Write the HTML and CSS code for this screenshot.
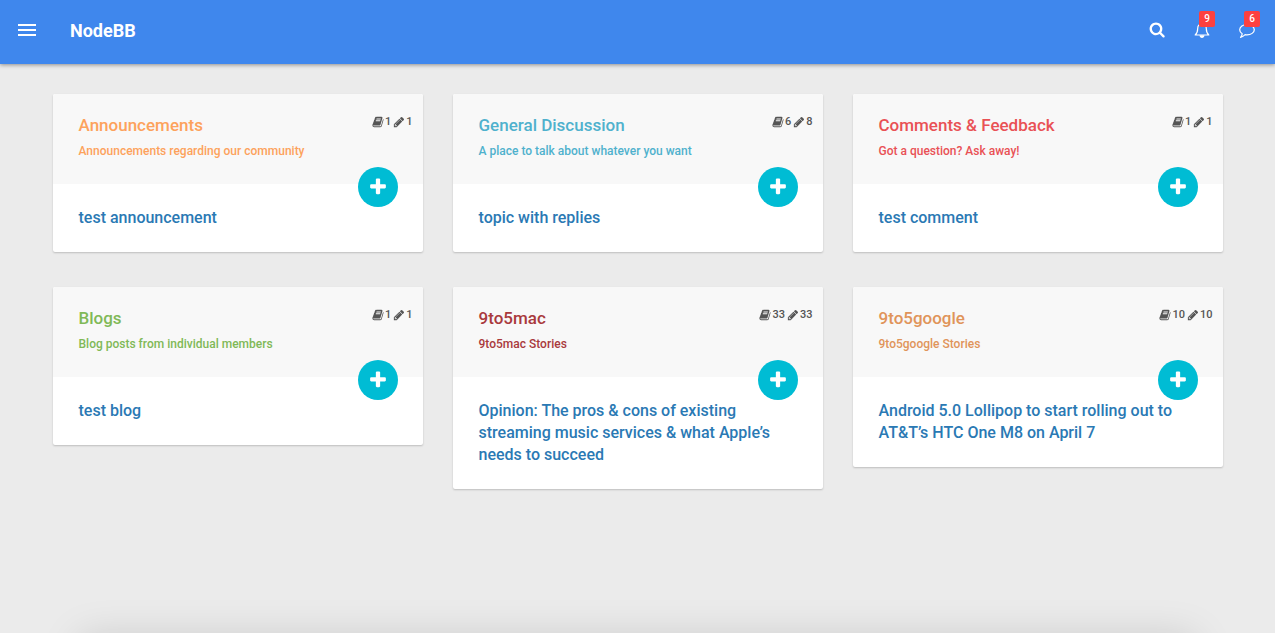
FILE: index.html
```html
<!DOCTYPE html>
<html lang="en">
<head>
<meta charset="utf-8">
<meta name="viewport" content="width=device-width, initial-scale=1">
<title>NodeBB</title>
<link rel="stylesheet" href="styles.css">
</head>
<body>
<svg class="sprite" aria-hidden="true">
  <symbol id="book" viewBox="0 0 1792 1792"><path d="M1703 478q40 57 18 129l-275 906q-19 64-76.5 107.5t-122.5 43.5h-923q-77 0-148.5-53.5t-99.5-131.5q-24-67-2-127 0-4 3-27t4-37q1-8-3-21.5t-3-19.5q2-11 8-21t16.5-23.5 16.5-23.5q23-38 45-91.5t30-91.5q3-10 .5-30t-.5-28q3-11 17-28t17-23q21-36 42-92t25-90q1-9-2.5-32t.5-28q4-13 22-30.5t22-22.5q19-26 42.5-84.5t27.5-96.5q1-8-3-25.5t-2-26.5q2-8 9-18t18-23 17-21q8-12 16.5-30.5t15-35 16-36 19.5-32 26.5-23.5 36-11.5 47.5 5.5l-1 3q38-9 51-9h761q74 0 114 56t18 130l-274 906q-36 119-71.5 153.5t-128.5 34.5h-869q-27 0-38 15-11 16-1 43 24 70 144 70h923q29 0 56-15.5t35-41.5l300-987q7-22 5-57 38 15 59 43zm-1064 2q-4 13 2 22.5t20 9.5h608q13 0 25.5-9.5t16.5-22.5l21-64q4-13-2-22.5t-20-9.5h-608q-13 0-25.5 9.5t-16.5 22.5zm-83 256q-4 13 2 22.5t20 9.5h608q13 0 25.5-9.5t16.5-22.5l21-64q4-13-2-22.5t-20-9.5h-608q-13 0-25.5 9.5t-16.5 22.5z"/></symbol>
  <symbol id="pencil" viewBox="0 0 1792 1792"><path d="M491 1536l91-91-235-235-91 91v107h128v128h107zm523-928q0-22-22-22-10 0-17 7l-542 542q-7 7-7 17 0 22 22 22 10 0 17-7l542-542q7-7 7-17zm-54-192l416 416-832 832h-416v-416zm683 96q0 53-37 90l-166 166-416-416 166-165q36-38 90-38 53 0 91 38l235 234q37 39 37 91z"/></symbol>
  <symbol id="plus" viewBox="0 0 1792 1792"><path d="M1600 736v192q0 40-28 68t-68 28h-416v416q0 40-28 68t-68 28h-192q-40 0-68-28t-28-68v-416h-416q-40 0-68-28t-28-68v-192q0-40 28-68t68-28h416v-416q0-40 28-68t68-28h192q40 0 68 28t28 68v416h416q40 0 68 28t28 68z"/></symbol>
</svg>

<header class="navbar">
  <button class="icon-button menu-button" type="button" aria-label="Menu">
    <svg width="18" height="12" viewBox="0 0 18 12"><path d="M0 0h18v2H0zM0 5h18v2H0zM0 10h18v2H0z"/></svg>
  </button>
  <a class="brand" href="#">NodeBB</a>
  <nav class="tools" aria-label="User tools">
    <button class="icon-button" type="button" aria-label="Search">
      <svg width="16" height="16" viewBox="0 80 1760 1760"><path d="M1216 832q0-185-131.500-316.500t-316.500-131.500-316.500 131.500-131.500 316.500 131.500 316.500 316.500 131.500 316.500-131.500 131.500-316.500zm512 832q0 52-38 90t-90 38q-54 0-90-38l-343-342q-179 124-399 124-143 0-273.500-55.500t-225-150-150-225-55.500-273.500 55.500-273.500 150-225 225-150 273.500-55.500 273.500 55.500 225 150 150 225 55.500 273.500q0 220-124 399l343 343q37 37 37 90z"/></svg>
    </button>
    <button class="icon-button" type="button" aria-label="Notifications, 9 unread">
      <svg width="16" height="16" viewBox="0 0 16 16"><path class="line" d="M1.200 13C3 11.500 3.700 9.500 3.700 6.500C3.700 3.500 5.300 2 8 2s4.300 1.500 4.300 4.500C12.300 9.500 13 11.500 14.800 13z"/><path d="M5.500 13.300h5C10.300 15 9.400 16 8 16s-2.300-1-2.500-2.700zM7.200.5h1.600v1.700H7.200z"/></svg>
      <span class="badge">9</span>
    </button>
    <button class="icon-button" type="button" aria-label="Chats, 6 unread">
      <svg width="16" height="16" viewBox="0 0 16 16"><path class="line" d="M8 2.500C12 2.500 15.300 4.700 15.300 7.700S12 12.800 8 12.800c-.7 0-1.300 0-1.900-.2C4.800 14 3.400 14.900 1.500 15.300c1-1 1.700-2 1.700-3.600C1.600 10.800.7 9.400.7 7.700.7 4.700 4 2.500 8 2.500z"/></svg>
      <span class="badge">6</span>
    </button>
  </nav>
</header>

<main class="categories">
  <article class="card">
    <header class="card-head orange">
      <div><h2><a href="#">Announcements</a></h2><p>Announcements regarding our community</p></div>
      <div class="stats"><svg><use href="#book"/></svg><span>1</span><svg><use href="#pencil"/></svg><span>1</span></div>
      <button class="add" type="button" aria-label="New topic"><svg><use href="#plus"/></svg></button>
    </header>
    <a class="topic" href="#">test announcement</a>
  </article>
  <article class="card">
    <header class="card-head cyan">
      <div><h2><a href="#">General Discussion</a></h2><p>A place to talk about whatever you want</p></div>
      <div class="stats"><svg><use href="#book"/></svg><span>6</span><svg><use href="#pencil"/></svg><span>8</span></div>
      <button class="add" type="button" aria-label="New topic"><svg><use href="#plus"/></svg></button>
    </header>
    <a class="topic" href="#">topic with replies</a>
  </article>
  <article class="card">
    <header class="card-head red">
      <div><h2><a href="#">Comments &amp; Feedback</a></h2><p>Got a question? Ask away!</p></div>
      <div class="stats"><svg><use href="#book"/></svg><span>1</span><svg><use href="#pencil"/></svg><span>1</span></div>
      <button class="add" type="button" aria-label="New topic"><svg><use href="#plus"/></svg></button>
    </header>
    <a class="topic" href="#">test comment</a>
  </article>
  <article class="card">
    <header class="card-head green">
      <div><h2><a href="#">Blogs</a></h2><p>Blog posts from individual members</p></div>
      <div class="stats"><svg><use href="#book"/></svg><span>1</span><svg><use href="#pencil"/></svg><span>1</span></div>
      <button class="add" type="button" aria-label="New topic"><svg><use href="#plus"/></svg></button>
    </header>
    <a class="topic" href="#">test blog</a>
  </article>
  <article class="card">
    <header class="card-head maroon">
      <div><h2><a href="#">9to5mac</a></h2><p>9to5mac Stories</p></div>
      <div class="stats"><svg><use href="#book"/></svg><span>33</span><svg><use href="#pencil"/></svg><span>33</span></div>
      <button class="add" type="button" aria-label="New topic"><svg><use href="#plus"/></svg></button>
    </header>
    <a class="topic" href="#">Opinion: The pros &amp; cons of existing streaming music services &amp; what Apple’s needs to succeed</a>
  </article>
  <article class="card">
    <header class="card-head amber">
      <div><h2><a href="#">9to5google</a></h2><p>9to5google Stories</p></div>
      <div class="stats"><svg><use href="#book"/></svg><span>10</span><svg><use href="#pencil"/></svg><span>10</span></div>
      <button class="add" type="button" aria-label="New topic"><svg><use href="#plus"/></svg></button>
    </header>
    <a class="topic" href="#">Android 5.0 Lollipop to start rolling out to AT&amp;T’s HTC One M8 on April 7</a>
  </article>
</main>
<div class="drawer"></div>
</body>
</html>
```

FILE: styles.css
```css
* { box-sizing: border-box; }

body {
  margin: 0;
  background: #ebebeb;
  font-family: Roboto, "Liberation Sans", sans-serif;
  font-weight: 500;
}

a { color: inherit; text-decoration: none; }
button { padding: 0; border: 0; font: inherit; cursor: pointer; }
svg { display: block; fill: currentColor; }
.sprite { position: absolute; width: 0; height: 0; }

.navbar {
  display: flex;
  align-items: center;
  height: 64px;
  padding: 0 13px 4px 12px;
  background: #3f87ed;
  color: #fff;
  box-shadow: 0 1px 4px rgba(0, 0, 0, .4);
}

.icon-button {
  position: relative;
  display: grid;
  place-items: center;
  width: 30px;
  height: 40px;
  background: none;
  color: inherit;
}

.line { fill: none; stroke: currentColor; stroke-width: 1.2; stroke-linejoin: round; }

.brand {
  margin-left: 28px;
  padding-top: 2px;
  font-size: 18px;
  line-height: 22px;
  font-weight: 700;
}

.tools { display: flex; gap: 15px; margin-left: auto; }

.badge {
  position: absolute;
  top: 1px;
  right: 2px;
  width: 16px;
  border-radius: 2px;
  background: #fd403f;
  font-size: 10px;
  line-height: 16px;
  text-align: center;
}

.categories {
  display: grid;
  grid-template-columns: repeat(auto-fit, minmax(300px, 1fr));
  align-items: start;
  gap: 35px 30px;
  max-width: 1170px;
  margin: 30px auto;
}

.card {
  border-radius: 2px;
  background: #fff;
  box-shadow: 0 1px 2px rgba(0, 0, 0, .2);
}

.card-head {
  position: relative;
  display: flex;
  justify-content: space-between;
  min-height: 90px;
  padding: 20px 10px 20px 26px;
  border-radius: 2px 2px 0 0;
  background: #f8f8f8;
}

h2 { margin: 0; font-size: 17px; line-height: 22px; font-weight: 500; }
p { margin: 6px 0 0; font-size: 12px; line-height: 18px; }

.orange { color: #fda25c; }
.cyan { color: #4fb1cd; }
.red { color: #e95155; }
.green { color: #80b957; }
.maroon { color: #a93a3d; }
.amber { color: #e0945a; }

.stats {
  display: flex;
  align-items: center;
  gap: 1px;
  height: 15px;
  color: #555;
  font-size: 11px;
  line-height: 15px;
}

.stats svg { width: 12px; height: 12px; }
.stats span + svg { margin-left: 1px; }

.add {
  position: absolute;
  right: 25px;
  bottom: -23px;
  display: grid;
  place-items: center;
  width: 40px;
  height: 40px;
  border-radius: 50%;
  background: #00bcd4;
  color: #fff;
}

.add svg { width: 20px; height: 20px; }

.topic {
  display: block;
  padding: 23px 26px;
  color: #2a79b4;
  font-size: 16px;
  line-height: 22px;
}

.drawer {
  position: fixed;
  top: 100%;
  left: 80px;
  right: 80px;
  height: 60px;
  box-shadow: 0 5px 40px rgba(0, 0, 0, .15);
}
```
